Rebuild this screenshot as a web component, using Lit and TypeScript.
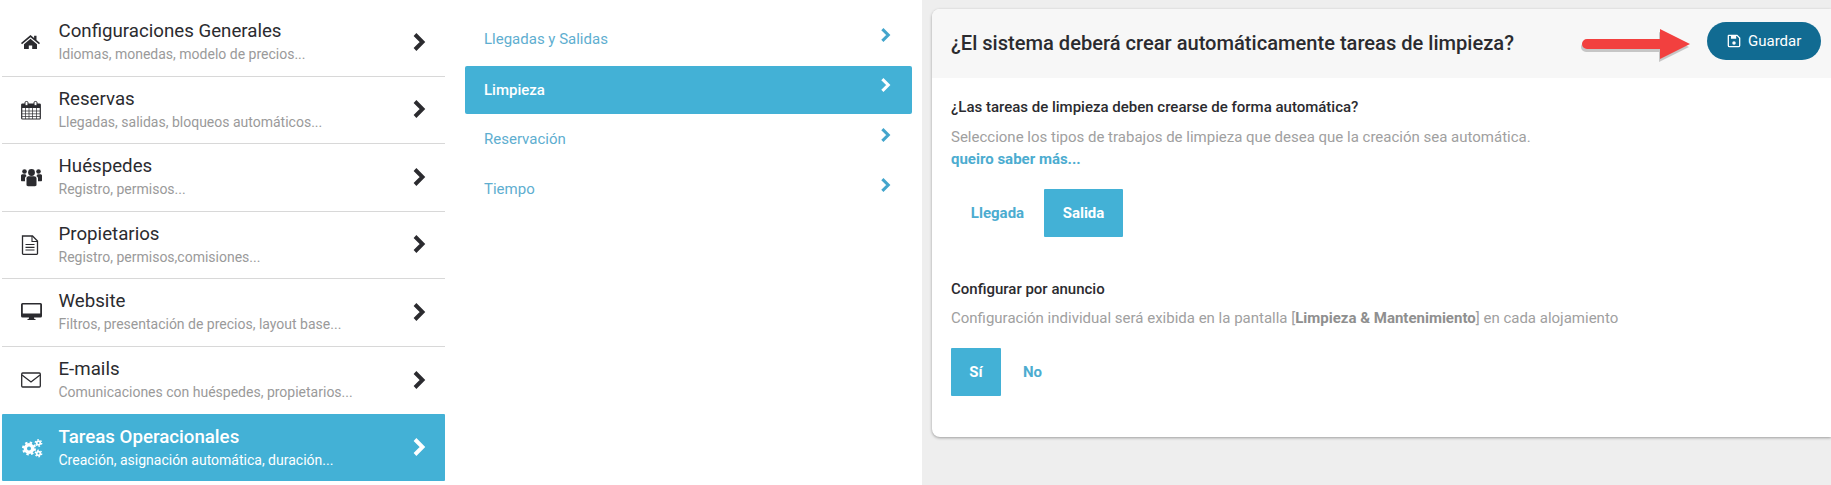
import { LitElement, html, css, svg } from "lit";
import { customElement } from "lit/decorators.js";

const chevron = (c: string) => html`<svg class=${c} viewBox="0 0 14 20"><path d="M3 2.500 10.500 10 3 17.500" fill="none" stroke="currentColor" stroke-width="3.900"/></svg>`;

const icons: Record<string, unknown> = {
  home: svg`<path d="M9.500 3 0 11l1 1.300L9.500 5.200 18 12.300l1-1.300-3.500-3V3.800h-2.400v2.200z"/><path d="M9.500 6.800 3 12.200V17h4.800v-3.600h3.400V17H16v-4.800z"/>`,
  cal: svg`<path d="M1.500 4h17a.8.8 0 0 1 .8.8v13.400a.8.8 0 0 1-.8.8h-17a.8.8 0 0 1-.8-.8V4.800a.8.8 0 0 1 .8-.8z" fill="none" stroke="currentColor" stroke-width="1.200"/><path d="M1 4h18v4H1z"/><path d="M4.500 8v11M8 8v11M11.500 8v11M15.500 8v11M1 11h18M1 13.800h18M1 16.500h18" stroke="currentColor" stroke-width=".7" fill="none"/><rect x="4" y="1.500" width="3" height="4" rx="1.200" fill="#fff" stroke="currentColor"/><rect x="13" y="1.500" width="3" height="4" rx="1.200" fill="#fff" stroke="currentColor"/>`,
  users: svg`<circle cx="10.500" cy="5.500" r="3.400"/><circle cx="3.500" cy="4.500" r="2.300"/><circle cx="17.500" cy="4.500" r="2.300"/><path d="M5.500 11.200c0-1.500 1.300-2 2.500-2h5c1.300 0 2.500.7 2.500 2.200V18c0 .7-.7 1.200-1.500 1.200H7c-.8 0-1.500-.5-1.500-1.200z"/><path d="M0 8.500C0 7.500 1 7.200 2 7.200h2.500c.3 1 .8 1.500 1.300 1.800-1.200.5-1.800 1.300-1.800 2.500v2.700H1c-.6 0-1-.4-1-1zM21 8.500c0-1-1-1.300-2-1.300h-2.500c-.3 1-.8 1.500-1.300 1.800 1.200.5 1.800 1.300 1.800 2.500v2.700h3c.6 0 1-.4 1-1z"/>`,
  doc: svg`<path d="M1.500 1h10l5 5v12.500a.8.8 0 0 1-.8.8H2.300a.8.8 0 0 1-.8-.8z" fill="none" stroke="currentColor" stroke-width="1.300"/><path d="M11 1v5.500h5.500" fill="none" stroke="currentColor" stroke-width="1.100"/><path d="M4.500 9.500h9M4.500 12.300h9M4.500 15h9" stroke="currentColor" stroke-width="1.200"/>`,
  monitor: svg`<path d="M1.500 1h18a1.500 1.500 0 0 1 1.500 1.500v11.500a1.500 1.500 0 0 1-1.500 1.500H13l.3 1.500h1.200v1H6.500v-1h1.200l.3-1.500H1.500A1.500 1.500 0 0 1 0 14V2.500A1.500 1.500 0 0 1 1.500 1zm.3 1.500v9h17.400v-9z" fill-rule="evenodd"/>`,
  mail: svg`<rect x=".7" y="3" width="18.600" height="14" rx="1" fill="none" stroke="currentColor" stroke-width="1.300"/><path d="m1 5 9 7 9-7" fill="none" stroke="currentColor" stroke-width="1.300"/>`,
  gears: svg`<g fill="none" stroke="currentColor"><circle cx="8" cy="10.500" r="3.700" stroke-width="3.400"/><circle cx="8" cy="10.500" r="6" stroke-width="2" stroke-dasharray="2.400 2.312"/><circle cx="17.500" cy="5" r="1.800" stroke-width="1.700"/><circle cx="17.500" cy="5" r="3.200" stroke-width="1.400" stroke-dasharray="1.600 1.750"/><circle cx="17.500" cy="15.500" r="1.800" stroke-width="1.700"/><circle cx="17.500" cy="15.500" r="3.200" stroke-width="1.400" stroke-dasharray="1.600 1.750"/></g>`,
};

const menu = [
  { i: "home", t: "Configuraciones Generales", s: "Idiomas, monedas, modelo de precios..." },
  { i: "cal", t: "Reservas", s: "Llegadas, salidas, bloqueos automáticos..." },
  { i: "users", t: "Huéspedes", s: "Registro, permisos..." },
  { i: "doc", t: "Propietarios", s: "Registro, permisos,comisiones..." },
  { i: "monitor", t: "Website", s: "Filtros, presentación de precios, layout base..." },
  { i: "mail", t: "E-mails", s: "Comunicaciones con huéspedes, propietarios..." },
  { i: "gears", t: "Tareas Operacionales", s: "Creación, asignación automática, duración...", active: true },
];
const sub = [
  { t: "Llegadas y Salidas" },
  { t: "Limpieza", active: true },
  { t: "Reservación" },
  { t: "Tiempo" },
];

@customElement("app-root")
export class AppRoot extends LitElement {
  static styles = css`
    :host { display: block; width: 1831px; height: 485px; overflow: hidden; background: #fff; font-family: Roboto, "Liberation Sans", sans-serif; }
    * { box-sizing: border-box; }
    .page { display: flex; height: 485px; }
    .menu { width: 443px; margin-left: 2px; padding-top: 9px; flex: none; }
    .item { height: 67.500px; display: flex; align-items: center; padding: 0 19px 0 19px; border-bottom: 1px solid #d8d8d8; color: #2b2b2f; }
    .item.last { border-bottom: 0; }
    .item.on { background: #43b1d6; color: #fff; border-bottom: 0; border-radius: 1px; height: 67px; }
    .ico { width: 20px; height: 20px; fill: currentColor; flex: none; margin-right: 17.500px; overflow: visible; }
    .txt { flex: 1; min-width: 0; }
    .t { font-size: 18.700px; line-height: 21px; font-weight: 400; }
    .on .t { font-weight: 500; }
    .s { font-size: 14px; line-height: 18px; margin-top: 3px; color: #9a9a9a; }
    .on .s { color: #fff; }
    .chev { width: 14px; height: 20px; flex: none; margin-top: -1px; }
    .submenu { width: 447px; margin-left: 20px; padding-top: 16px; flex: none; }
    .sub { height: 50px; display: flex; align-items: center; justify-content: space-between; padding: 0 21px 4px 19px; font-size: 15px; color: #5eaed0; }
    .sub.on { height: 48px; margin-bottom: 2px; background: #43b1d6; color: #fff; font-weight: 500; border-radius: 2px; padding-bottom: 0; }
    .sub .chev { width: 11px; height: 16px; margin-top: -8px; color: #43a5cc; }
    .sub.on .chev { color: #fff; margin-top: -11px; }
    .main { flex: 1; margin-left: 10px; background: #eee; padding: 9px 0 0 10px; min-width: 0; }
    .card { height: 428px; background: #fff; border-radius: 8px 0 0 8px; box-shadow: 0 1px 3px rgba(0,0,0,.35); overflow: hidden; }
    .head { height: 69px; background: #f7f7f7; display: flex; align-items: center; justify-content: space-between; padding: 0 10px 0 19px; }
    h1 { margin: 0; font-size: 20.100px; font-weight: 500; color: #2b2b2f; position: relative; top: -1px; }
    .tools { display: flex; align-items: center; gap: 17px; position: relative; top: -3px; }
    .arrow { width: 108px; height: 36px; overflow: visible; position: relative; top: 3px; }
    .save { display: flex; align-items: center; gap: 7px; width: 114px; height: 38px; background: #116b92; color: #fff; border: 0; border-radius: 19px; padding: 0 0 0 20px; font: 400 15px Roboto, sans-serif; }
    .save svg { width: 14px; height: 14px; flex: none; }
    .body { padding: 19px 19px 0; }
    .q { font-size: 15px; font-weight: 500; line-height: 20px; color: #2b2b2f; }
    .d { font-size: 15px; line-height: 20px; color: #a0a0a0; margin-top: 10px; font-weight: 400; }
    .d b { font-weight: 700; color: #8f8f8f; }
    .link { font-size: 15px; font-weight: 700; line-height: 20px; color: #4cacd0; margin-top: 2px; }
    .opts { display: flex; align-items: stretch; height: 48px; font-size: 15px; font-weight: 700; color: #4cacd0; }
    .opts div { display: flex; align-items: center; justify-content: center; }
    .opts .on { background: #43b1d6; color: #fff; border-radius: 1px; }
    .a { margin-top: 20px; }
    .a .x { width: 93px; } .a .on { width: 79px; }
    .conf { margin-top: 42px; }
    .conf + .d { margin-top: 9px; }
    .b { margin-top: 20px; }
    .b .on { width: 50px; } .b .x { width: 63px; }
  `;

  render() {
    return html`<div class="page">
      <nav class="menu">
        ${menu.map((m, n) => html`<div class="item ${m.active ? "on" : ""} ${n === 5 ? "last" : ""}">
          <svg class="ico" viewBox="0 0 20 20">${icons[m.i]}</svg>
          <div class="txt"><div class="t">${m.t}</div><div class="s">${m.s}</div></div>
          ${chevron("chev")}
        </div>`)}
      </nav>
      <nav class="submenu">
        ${sub.map((m) => html`<div class="sub ${m.active ? "on" : ""}"><span>${m.t}</span>${chevron("chev")}</div>`)}
      </nav>
      <main class="main">
        <section class="card">
          <header class="head">
            <h1>¿El sistema deberá crear automáticamente tareas de limpieza?</h1>
            <div class="tools">
              <svg class="arrow" viewBox="0 0 108 36">
                <path d="M5 13h73V3l30 15-30 15V23H5a5 5 0 0 1 0-10z" fill="#555" opacity=".3" transform="translate(-1 3)"/>
                <path d="M5 13h73V3l30 15-30 15V23H5a5 5 0 0 1 0-10z" fill="#f2403f"/>
              </svg>
              <button class="save">
                <svg viewBox="0 0 16 16"><path d="M2 1.500h9.500L14.500 4.500V13a1.500 1.500 0 0 1-1.500 1.500H3A1.500 1.500 0 0 1 1.500 13V2z" fill="none" stroke="#fff" stroke-width="1.500"/><path d="M4.500 2h6v3.500h-6z" fill="#fff"/><circle cx="8" cy="10.200" r="2" fill="#fff"/></svg>
                Guardar
              </button>
            </div>
          </header>
          <div class="body">
            <div class="q">¿Las tareas de limpieza deben crearse de forma automática?</div>
            <div class="d">Seleccione los tipos de trabajos de limpieza que desea que la creación sea automática.</div>
            <div class="link">queiro saber más...</div>
            <div class="opts a"><div class="x">Llegada</div><div class="on">Salida</div></div>
            <div class="conf q">Configurar por anuncio</div>
            <div class="d">Configuración individual será exibida en la pantalla [<b>Limpieza &amp; Mantenimiento</b>] en cada alojamiento</div>
            <div class="opts b"><div class="on">Sí</div><div class="x">No</div></div>
          </div>
        </section>
      </main>
    </div>`;
  }
}
